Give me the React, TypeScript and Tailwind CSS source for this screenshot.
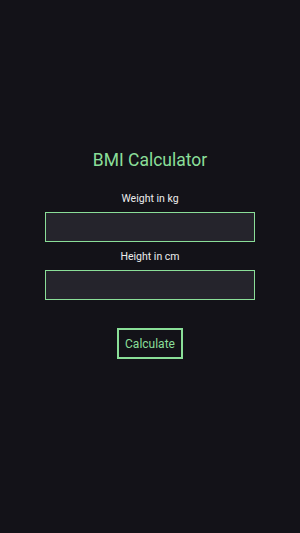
export default function App() {
  return (
    <div className="w-[300px] h-[533px] bg-[#131218] flex flex-col items-center pt-[148px]" style={{ fontFamily: "Roboto, 'Liberation Sans', sans-serif" }}>
      <h1 className="text-[17.5px] leading-[24px] text-[#8ade98]">BMI Calculator</h1>
      <label className="mt-[20px] text-[10.5px] leading-[14px] text-[#ececec]">Weight in kg</label>
      <input className="mt-[6px] w-[210px] h-[30px] bg-[#25242c] border border-[#8ade98] outline-none text-white px-2 text-[12px]" />
      <label className="mt-[8px] text-[10.5px] leading-[14px] text-[#ececec]">Height in cm</label>
      <input className="mt-[6px] w-[210px] h-[30px] bg-[#25242c] border border-[#8ade98] outline-none text-white px-2 text-[12px]" />
      <button className="mt-[28px] w-[66px] h-[31px] border-2 border-[#8ade98] text-[#8ade98] text-[12px] bg-transparent">Calculate</button>
    </div>
  );
}
